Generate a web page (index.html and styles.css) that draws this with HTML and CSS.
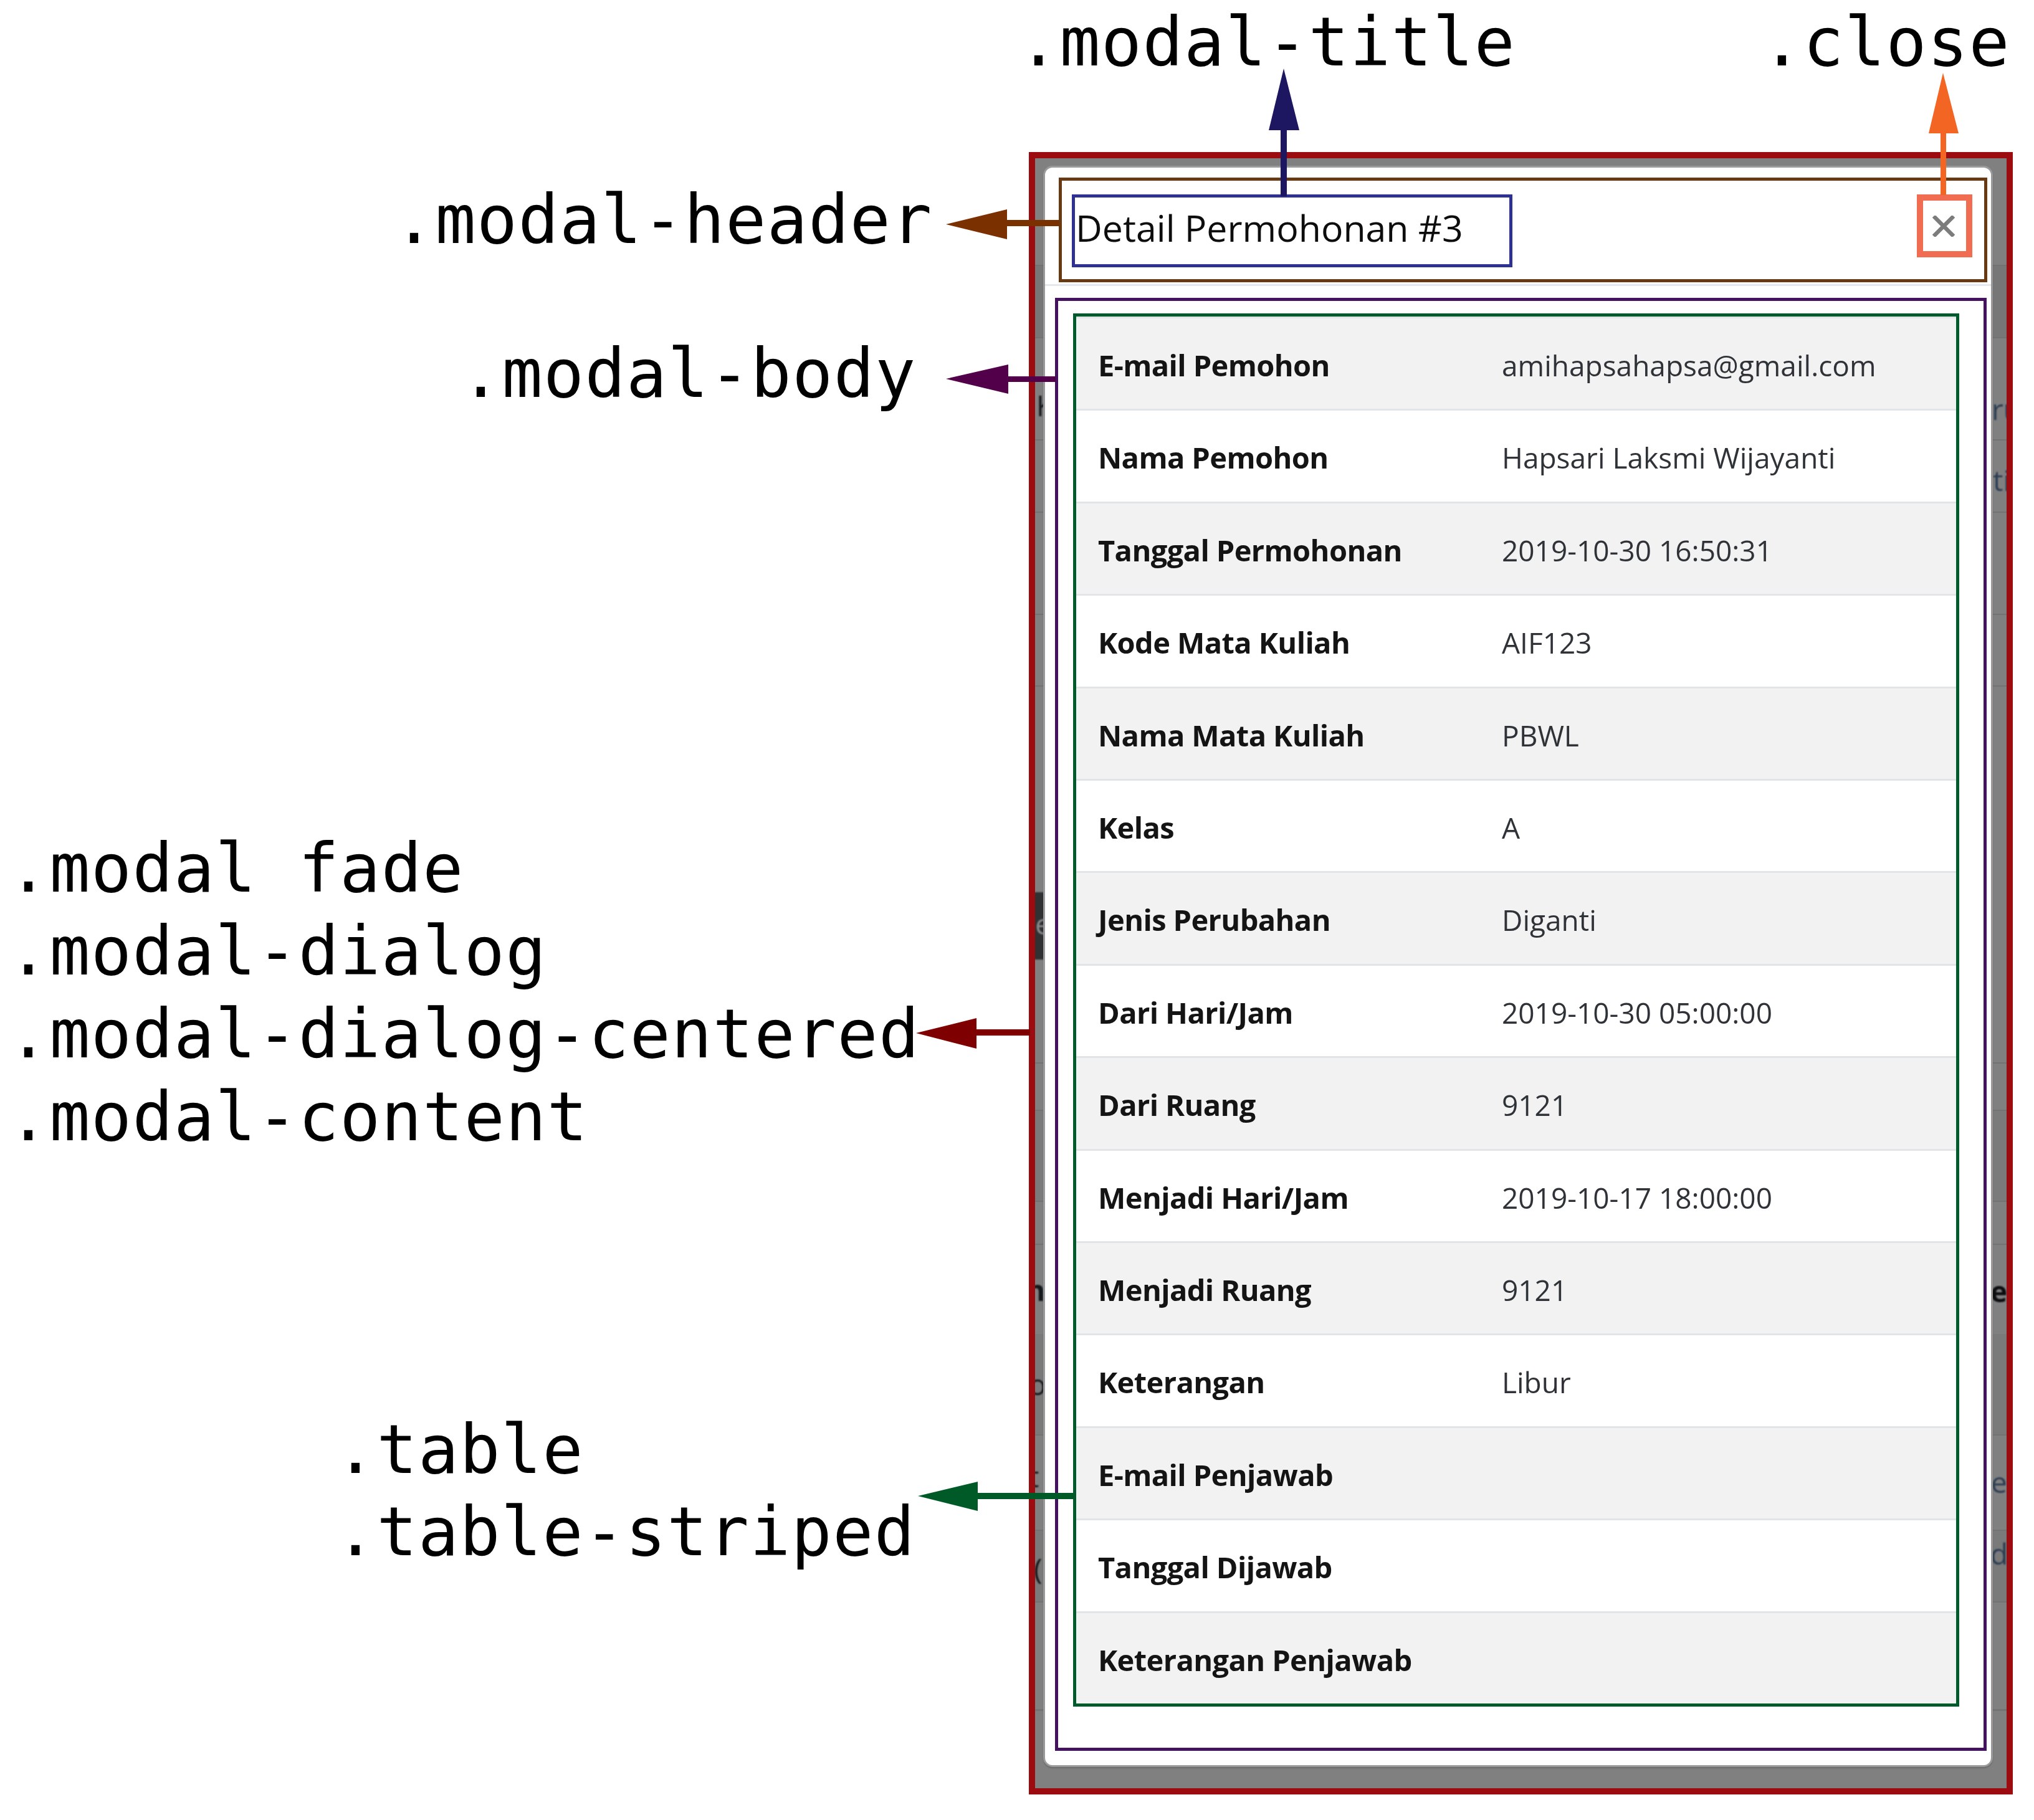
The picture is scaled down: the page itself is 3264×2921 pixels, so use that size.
FILE: index.html
```html
<!DOCTYPE html>
<html lang="id">
<head>
<meta charset="utf-8">
<title>Bootstrap modal anatomy</title>
<link rel="stylesheet" href="styles.css">
</head>
<body>
<div class="canvas">
  <div class="frame">
    <div class="backdrop">
      <span class="frag f-k">Kode</span>
      <span class="frag-btn"><span class="frag f-e">e</span></span>
      <span class="frag f-n">n</span>
      <span class="frag f-o">o</span>
      <span class="frag f-t">t</span>
      <span class="frag f-p">(</span>
      <span class="frag link f-ru">ru</span>
      <span class="frag link f-ti">.ti</span>
      <span class="frag bold f-et">et</span>
      <span class="frag link f-er">er</span>
      <span class="frag link f-da">da</span>
    </div>
    <div class="modal-content">
      <div class="modal-header">
        <div class="hl-header">
          <div class="hl-title">Detail Permohonan #3</div>
          <div class="hl-close">
            <svg class="x-icon" width="36" height="34" viewBox="0 0 36 34"><path d="M2 1 L34 33 M34 1 L2 33" stroke="#7c7c7c" stroke-width="6.5" fill="none"/></svg>
          </div>
        </div>
      </div>
      <div class="modal-body">
        <div class="hl-body">
          <div class="hl-table">
            <table class="table">
              <colgroup><col class="c1"><col class="c2"></colgroup>
              <tbody>
                <tr><th>E-mail Pemohon</th><td>amihapsahapsa@gmail.com</td></tr>
                <tr><th>Nama Pemohon</th><td>Hapsari Laksmi Wijayanti</td></tr>
                <tr><th>Tanggal Permohonan</th><td>2019-10-30 16:50:31</td></tr>
                <tr><th>Kode Mata Kuliah</th><td>AIF123</td></tr>
                <tr><th>Nama Mata Kuliah</th><td>PBWL</td></tr>
                <tr><th>Kelas</th><td>A</td></tr>
                <tr><th>Jenis Perubahan</th><td>Diganti</td></tr>
                <tr><th>Dari Hari/Jam</th><td>2019-10-30 05:00:00</td></tr>
                <tr><th>Dari Ruang</th><td>9121</td></tr>
                <tr><th>Menjadi Hari/Jam</th><td>2019-10-17 18:00:00</td></tr>
                <tr><th>Menjadi Ruang</th><td>9121</td></tr>
                <tr><th>Keterangan</th><td>Libur</td></tr>
                <tr><th>E-mail Penjawab</th><td></td></tr>
                <tr><th>Tanggal Dijawab</th><td></td></tr>
                <tr><th>Keterangan Penjawab</th><td></td></tr>
              </tbody>
            </table>
          </div>
        </div>
      </div>
    </div>
  </div>

  <div class="label l-title">.modal-title</div>
  <div class="label l-close">.close</div>
  <div class="label l-header">.modal-header</div>
  <div class="label l-body">.modal-body</div>
  <div class="label l-stack">.modal fade
.modal-dialog
.modal-dialog-centered
.modal-content</div>
  <div class="label l-table">.table
.table-striped</div>

  <svg class="arrows" width="3264" height="2921" viewBox="0 0 3264 2921">
    <rect x="2055" y="205" width="10" height="110" fill="#1d1660"/>
    <polygon points="2060,110 2036,209 2085,209" fill="#1d1660"/>
    <rect x="3114" y="210" width="9" height="103" fill="#f26522"/>
    <polygon points="3118,117 3095,214 3143,214" fill="#f26522"/>
    <rect x="1612" y="353" width="88" height="10" fill="#7b3000"/>
    <polygon points="1518,360 1616,336 1616,384" fill="#7b3000"/>
    <rect x="1614" y="604" width="80" height="9" fill="#52004a"/>
    <polygon points="1518,608 1618,585 1618,632" fill="#52004a"/>
    <rect x="1563" y="1652" width="90" height="10" fill="#7f0000"/>
    <polygon points="1470,1658 1567,1634 1567,1683" fill="#7f0000"/>
    <rect x="1565" y="2396" width="158" height="10" fill="#005a28"/>
    <polygon points="1473,2401 1569,2378 1569,2425" fill="#005a28"/>
  </svg>
</div>
</body>
</html>
```

FILE: styles.css
```css
* { box-sizing: border-box; }

html, body {
  margin: 0;
  padding: 0;
  background: #ffffff;
}

.canvas {
  position: relative;
  width: 3264px;
  height: 2921px;
  padding: 244px 0 0 1651px;
  overflow: hidden;
}

/* screenshot frame (red) with the dimmed page behind the modal */
.frame {
  position: relative;
  width: 1579px;
  height: 2636px;
  border: 10px solid #9b0b10;
  overflow: hidden;
  padding: 12px 22px 34px 13px;
  background:
    linear-gradient(#727272, #727272) 0 171px / 100% 2px no-repeat,
    linear-gradient(#777777, #777777) 0 173px / 100% 114px no-repeat,
    linear-gradient(#727272, #727272) 0 287px / 100% 2px no-repeat,
    linear-gradient(#737373, #737373) 0 451px / 100% 2px no-repeat,
    linear-gradient(#737373, #737373) 0 567px / 100% 2px no-repeat,
    linear-gradient(#737373, #737373) 0 731px / 100% 2px no-repeat,
    linear-gradient(#737373, #737373) 0 846px / 100% 2px no-repeat,
    linear-gradient(#737373, #737373) 0 1451px / 100% 2px no-repeat,
    linear-gradient(#737373, #737373) 0 1527px / 100% 2px no-repeat,
    linear-gradient(#7b7b7b, #7b7b7b) 0 1529px / 100% 144px no-repeat,
    linear-gradient(#737373, #737373) 0 1673px / 100% 2px no-repeat,
    linear-gradient(#737373, #737373) 0 1742px / 100% 2px no-repeat,
    linear-gradient(#7a7a7a, #7a7a7a) 0 1887px / 100% 161px no-repeat,
    linear-gradient(#737373, #737373) 0 2048px / 100% 2px no-repeat,
    linear-gradient(#737373, #737373) 0 2201px / 100% 2px no-repeat,
    linear-gradient(#7a7a7a, #7a7a7a) 0 2203px / 100% 113px no-repeat,
    linear-gradient(#737373, #737373) 0 2316px / 100% 2px no-repeat,
    linear-gradient(#737373, #737373) 0 2489px / 100% 3px no-repeat,
    #808080;
}

.backdrop {
  position: absolute;
  inset: 0;
  font-family: "Open Sans", "Noto Sans", sans-serif;
  font-size: 46px;
  line-height: 60px;
  color: #15181b;
  filter: blur(0.8px);
}

.frag {
  position: absolute;
  white-space: nowrap;
}
.frag.link { color: #2b3d52; }
.frag.bold { font-weight: 700; color: #0b0c0d; }

.frag-btn {
  position: absolute;
  left: -6px;
  top: 1178px;
  width: 60px;
  height: 108px;
  background: #2f3133;
  border-radius: 6px;
}
.f-e { left: 6px; top: 20px; color: #8a8a8a; }

.f-k  { left: 2px;  top: 366px; }
.f-n  { left: -14px; top: 1786px; font-weight: 700; }
.f-o  { left: -10px; top: 1937px; }
.f-t  { left: -10px; top: 2085px; }
.f-p  { left: -2px;  top: 2233px; }
.f-ru { left: 1535px; top: 372px; }
.f-ti { left: 1525px; top: 486px; }
.f-et { left: 1533px; top: 1788px; }
.f-er { left: 1534px; top: 2094px; }
.f-da { left: 1533px; top: 2209px; }

.modal-content {
  position: relative;
  width: 1524px;
  height: 2570px;
  background: #ffffff;
  border: 3px solid #9a9a9a;
  border-radius: 15px;
  box-shadow: 0 2px 2px rgba(0, 0, 0, 0.18);
  display: flex;
  flex-direction: column;
  font-family: "Open Sans", "Noto Sans", sans-serif;
  color: #212529;
}

.modal-header {
  padding: 16px 6px 3px 22px;
  border-bottom: 3px solid #e6e9ec;
}

.hl-header {
  border: 5px solid #673a14;
  padding: 22px 19px 19px 16px;
  display: flex;
  justify-content: space-between;
  align-items: flex-start;
}

.hl-title {
  width: 707px;
  height: 117px;
  border: 5px solid #2e3192;
  padding: 4px 0 0 1px;
  font-size: 59px;
  font-weight: 500;
  line-height: 88px;
  color: #0d0d0d;
  white-space: nowrap;
}

.hl-close {
  width: 89px;
  height: 101px;
  border: 10px solid #f16d52;
  padding-right: 4px;
  display: flex;
  align-items: center;
  justify-content: center;
}

.x-icon { display: block; }

.modal-body {
  flex: 1;
  padding: 19px 7px 23px 16px;
}

.hl-body {
  height: 100%;
  border: 5px solid #44125f;
  padding: 20px 39px 66px 24px;
}

.hl-table {
  border: 5px solid #005a2b;
}

.table {
  width: 100%;
  border-collapse: separate;
  border-spacing: 0;
  table-layout: fixed;
}

.c1 { width: 648px; }

.table th,
.table td {
  border-top: 3px solid #e2e5e8;
  padding: 39px 20px 33px 35px;
  line-height: 73.4px;
  text-align: left;
  vertical-align: middle;
  white-space: nowrap;
}

.table th {
  font-size: 47px;
  font-weight: 700;
  color: #141414;
  letter-spacing: -0.6px;
}

.table td {
  font-size: 46px;
  font-weight: 400;
  color: #2f3338;
}

.table tbody tr:nth-child(odd) {
  background: #f2f2f2;
}

/* annotation labels */
.label {
  position: absolute;
  font-family: "DejaVu Sans Mono", "Liberation Mono", monospace;
  font-size: 108px;
  line-height: 108px;
  letter-spacing: 1.5px;
  color: #000;
  white-space: pre;
}

.l-title { left: 1634px; top: 14px; }
.l-close { left: 2827px; top: 14px; }
.l-header { left: 632px; top: 299px; }
.l-body { left: 739px; top: 546px; }
.l-stack { left: 13px; top: 1327px; line-height: 133px; }
.l-table { left: 538px; top: 2261px; line-height: 132px; }

.arrows {
  position: absolute;
  left: 0;
  top: 0;
  pointer-events: none;
}
```
